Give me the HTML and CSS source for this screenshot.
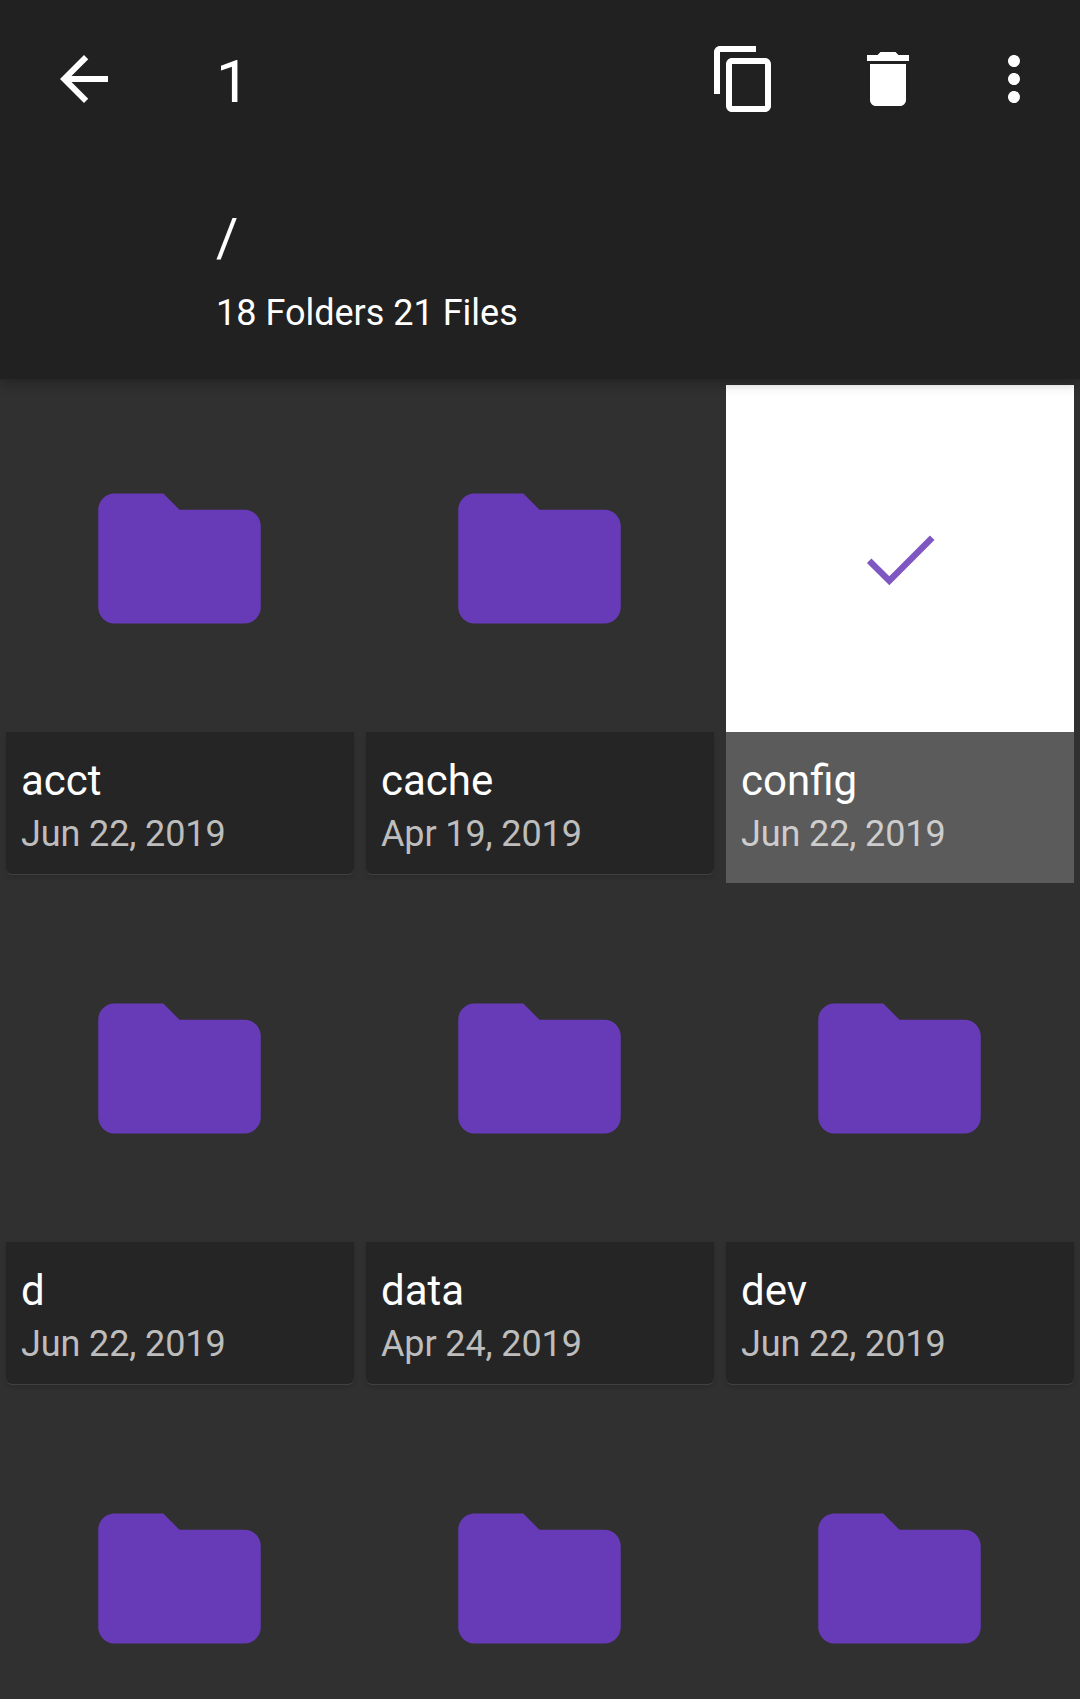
FILE: index.html
```html
<!DOCTYPE html>
<html lang="en">
<head>
<meta charset="utf-8">
<title>Files</title>
<link rel="stylesheet" href="styles.css">
</head>
<body>
<svg class="defs" width="0" height="0">
  <symbol id="folder" viewBox="0 0 24 24"><path d="M10 4H4c-1.1 0-2 .9-2 2v12c0 1.1.9 2 2 2h16c1.1 0 2-.9 2-2V8c0-1.1-.9-2-2-2h-8l-2-2z"/></symbol>
</svg>
<header class="header">
  <div class="toolbar">
    <svg class="icon" viewBox="0 0 24 24"><path d="M20 11H7.83l5.59-5.59L12 4l-8 8 8 8 1.41-1.41L7.83 13H20v-2z"/></svg>
    <span class="count">1</span>
    <svg class="icon" viewBox="0 0 24 24"><path d="M16 1H4c-1.1 0-2 .9-2 2v14h2V3h12V1zm3 4H8c-1.1 0-2 .9-2 2v14c0 1.1.9 2 2 2h11c1.1 0 2-.9 2-2V7c0-1.1-.9-2-2-2zm0 16H8V7h11v14z"/></svg>
    <svg class="icon icon-delete" viewBox="0 0 24 24"><path d="M6 19c0 1.1.9 2 2 2h8c1.1 0 2-.9 2-2V7H6v12zM19 4h-3.5l-1-1h-5l-1 1H5v2h14V4z"/></svg>
    <svg class="icon" viewBox="0 0 24 24"><path d="M12 8c1.1 0 2-.9 2-2s-.9-2-2-2-2 .9-2 2 .9 2 2 2zm0 2c-1.1 0-2 .9-2 2s.9 2 2 2 2-.9 2-2-.9-2-2-2zm0 6c-1.1 0-2 .9-2 2s.9 2 2 2 2-.9 2-2-.9-2-2-2z"/></svg>
  </div>
  <div class="path">/</div>
  <div class="summary">18 Folders 21 Files</div>
</header>
<main class="grid">
  <div class="item"><div class="preview"><svg class="folder"><use href="#folder"/></svg></div><div class="info"><div class="name">acct</div><div class="date">Jun 22, 2019</div></div></div>
  <div class="item"><div class="preview"><svg class="folder"><use href="#folder"/></svg></div><div class="info"><div class="name">cache</div><div class="date">Apr 19, 2019</div></div></div>
  <div class="item selected"><div class="preview"><svg class="check" viewBox="0 0 72 54"><path d="M5.2 28.7 25.3 48.7 68.2 5.8"/></svg></div><div class="info"><div class="name">config</div><div class="date">Jun 22, 2019</div></div></div>
  <div class="item"><div class="preview"><svg class="folder"><use href="#folder"/></svg></div><div class="info"><div class="name">d</div><div class="date">Jun 22, 2019</div></div></div>
  <div class="item"><div class="preview"><svg class="folder"><use href="#folder"/></svg></div><div class="info"><div class="name">data</div><div class="date">Apr 24, 2019</div></div></div>
  <div class="item"><div class="preview"><svg class="folder"><use href="#folder"/></svg></div><div class="info"><div class="name">dev</div><div class="date">Jun 22, 2019</div></div></div>
  <div class="item"><div class="preview"><svg class="folder"><use href="#folder"/></svg></div></div>
  <div class="item"><div class="preview"><svg class="folder"><use href="#folder"/></svg></div></div>
  <div class="item"><div class="preview"><svg class="folder"><use href="#folder"/></svg></div></div>
</main>
</body>
</html>
```
FILE: styles.css
```css
* { box-sizing: border-box; }
html, body { height: 1699px; overflow: hidden; }
body {
  margin: 0;
  display: flex;
  flex-direction: column;
  background: #303030;
  color: #fff;
  font-family: Roboto, sans-serif;
}
.defs { position: absolute; }
.header {
  position: relative;
  z-index: 1;
  flex: none;
  height: 379px;
  background: #212121;
  box-shadow: 0 3px 12px rgba(0, 0, 0, .3);
}
.toolbar {
  display: flex;
  align-items: center;
  height: 158px;
  padding: 0 30px 0 48px;
}
.icon { width: 72px; height: 72px; fill: #fff; flex: none; }
.icon-delete { margin: 0 54px 0 72px; }
.count { flex: 1; margin-left: 96px; padding-top: 6px; font-size: 60px; line-height: 72px; }
.path { margin: 46px 0 0 216px; font-size: 54px; line-height: 68px; }
.summary { margin: 19px 0 0 216px; font-size: 36px; line-height: 44px; }
.grid {
  flex: 1;
  min-height: 0;
  overflow: hidden;
  display: grid;
  grid-template-columns: repeat(3, 348px);
  grid-auto-rows: 498px;
  gap: 12px;
  padding: 6px;
}
.preview {
  display: flex;
  align-items: center;
  justify-content: center;
  height: 347px;
}
.folder { width: 195px; height: 195px; margin-right: 1px; fill: #673ab7; }
.info {
  height: 142px;
  padding: 22px 15px 0;
  background: #252525;
  border-radius: 0 0 6px 6px;
  box-shadow: 0 1px 0 #414141, 0 3px 4px rgba(0, 0, 0, .12);
}
.name { font-size: 42px; line-height: 54px; }
.date { padding-top: 1px; font-size: 36px; line-height: 50px; letter-spacing: -.12px; color: #bdbdbd; }
.selected .preview { background: #fff; }
.selected .info { height: 151px; background: #5b5b5b; border-radius: 0; box-shadow: none; }
.selected .date { color: #cdcdcd; }
.check { width: 72px; height: 54px; fill: none; stroke: #7e57c2; stroke-width: 6.4; }
```
